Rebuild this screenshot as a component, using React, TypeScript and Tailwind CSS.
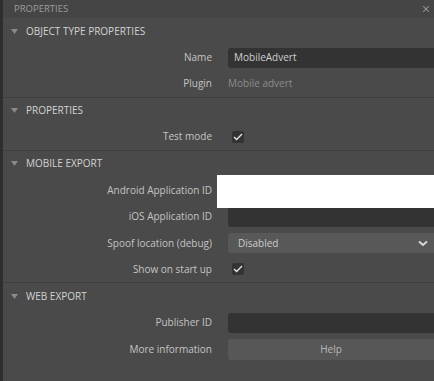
import { X } from "lucide-react"

function Triangle() {
  return (
    <svg width="7" height="5" viewBox="0 0 7 5" className="shrink-0">
      <path d="M0 0H7L3.5 5Z" fill="#8a8a8a" />
    </svg>
  )
}

function Check() {
  return (
    <div className="w-[12px] h-[12px] rounded-[2px] bg-[#333333] flex items-center justify-center">
      <svg width="10" height="8" viewBox="0 0 10 8" fill="none">
        <path d="M1 4L3.6 6.5L9 1" stroke="#e6e6e6" strokeWidth="1.3" />
      </svg>
    </div>
  )
}

function SectionHeader({ title }: { title: string }) {
  return (
    <div className="h-[26.5px] flex items-center pl-[8px] gap-[8px] text-[10px] text-[#d2d2d2]">
      <Triangle />
      <span>{title}</span>
    </div>
  )
}

function Row({ label, children, last }: { label: string; children?: React.ReactNode; last?: boolean }) {
  return (
    <div className={`h-[26.5px] flex items-center ${last ? "border-b border-[#3e3e3e]" : ""}`}>
      <div className="w-[209px] text-right text-[10px] text-[#c4c4c4] shrink-0">{label}</div>
      <div className="ml-[16px] flex-1 flex items-center min-w-0">{children}</div>
    </div>
  )
}

function TextBox({ value }: { value?: string }) {
  return (
    <div className="h-[20px] w-full rounded-l-[3px] bg-[#333333] flex items-center px-[6px] text-[10px] text-[#cfcfcf]">
      {value}
    </div>
  )
}

export default function App() {
  return (
    <div
      className="w-[434px] h-[381px] flex bg-[#4a4a4a] overflow-hidden"
      style={{ fontFamily: '"Open Sans", "Noto Sans", sans-serif' }}
    >
      <div className="w-[3px] bg-[#2e2e2e] shrink-0" />
      <div className="flex-1 flex flex-col">
        {/* Title bar */}
        <div className="h-[18px] bg-[#454545] flex items-center justify-between pl-[11px] pr-[3px]">
          <span className="text-[9.5px] text-[#9c9c9c]">PROPERTIES</span>
          <X className="w-[10px] h-[10px] text-[#a0a0a0]" strokeWidth={2.5} />
        </div>

        {/* Object type properties */}
        <SectionHeader title="OBJECT TYPE PROPERTIES" />
        <Row label="Name">
          <TextBox value="MobileAdvert" />
        </Row>
        <Row label="Plugin" last>
          <span className="text-[10px] text-[#8c8c8c]">Mobile advert</span>
        </Row>

        {/* Properties */}
        <SectionHeader title="PROPERTIES" />
        <Row label="Test mode" last>
          <div className="ml-[4px]">
            <Check />
          </div>
        </Row>

        {/* Mobile export */}
        <SectionHeader title="MOBILE EXPORT" />
        <div className="relative">
          <Row label="Android Application ID" />
          <div className="absolute left-[214px] right-0 top-[-2px] h-[33px] bg-white" />
        </div>
        <Row label="iOS Application ID">
          <TextBox />
        </Row>
        <Row label="Spoof location (debug)">
          <div className="h-[20px] w-full rounded-l-[3px] bg-[#585858] flex items-center justify-between pl-[10px] pr-[6px] text-[10px] text-[#cdcdcd]">
            <span>Disabled</span>
            <svg width="10" height="7" viewBox="0 0 10 7" fill="none">
              <path d="M1 1.5L5 5L9 1.5" stroke="#d8d8d8" strokeWidth="2" />
            </svg>
          </div>
        </Row>
        <Row label="Show on start up" last>
          <div className="ml-[4px]">
            <Check />
          </div>
        </Row>

        {/* Web export */}
        <SectionHeader title="WEB EXPORT" />
        <Row label="Publisher ID">
          <TextBox />
        </Row>
        <Row label="More information">
          <div className="h-[21px] w-full rounded-l-[3px] bg-[#575757] flex items-center justify-center text-[10px] text-[#b8b8b8]">
            Help
          </div>
        </Row>
      </div>
    </div>
  )
}
